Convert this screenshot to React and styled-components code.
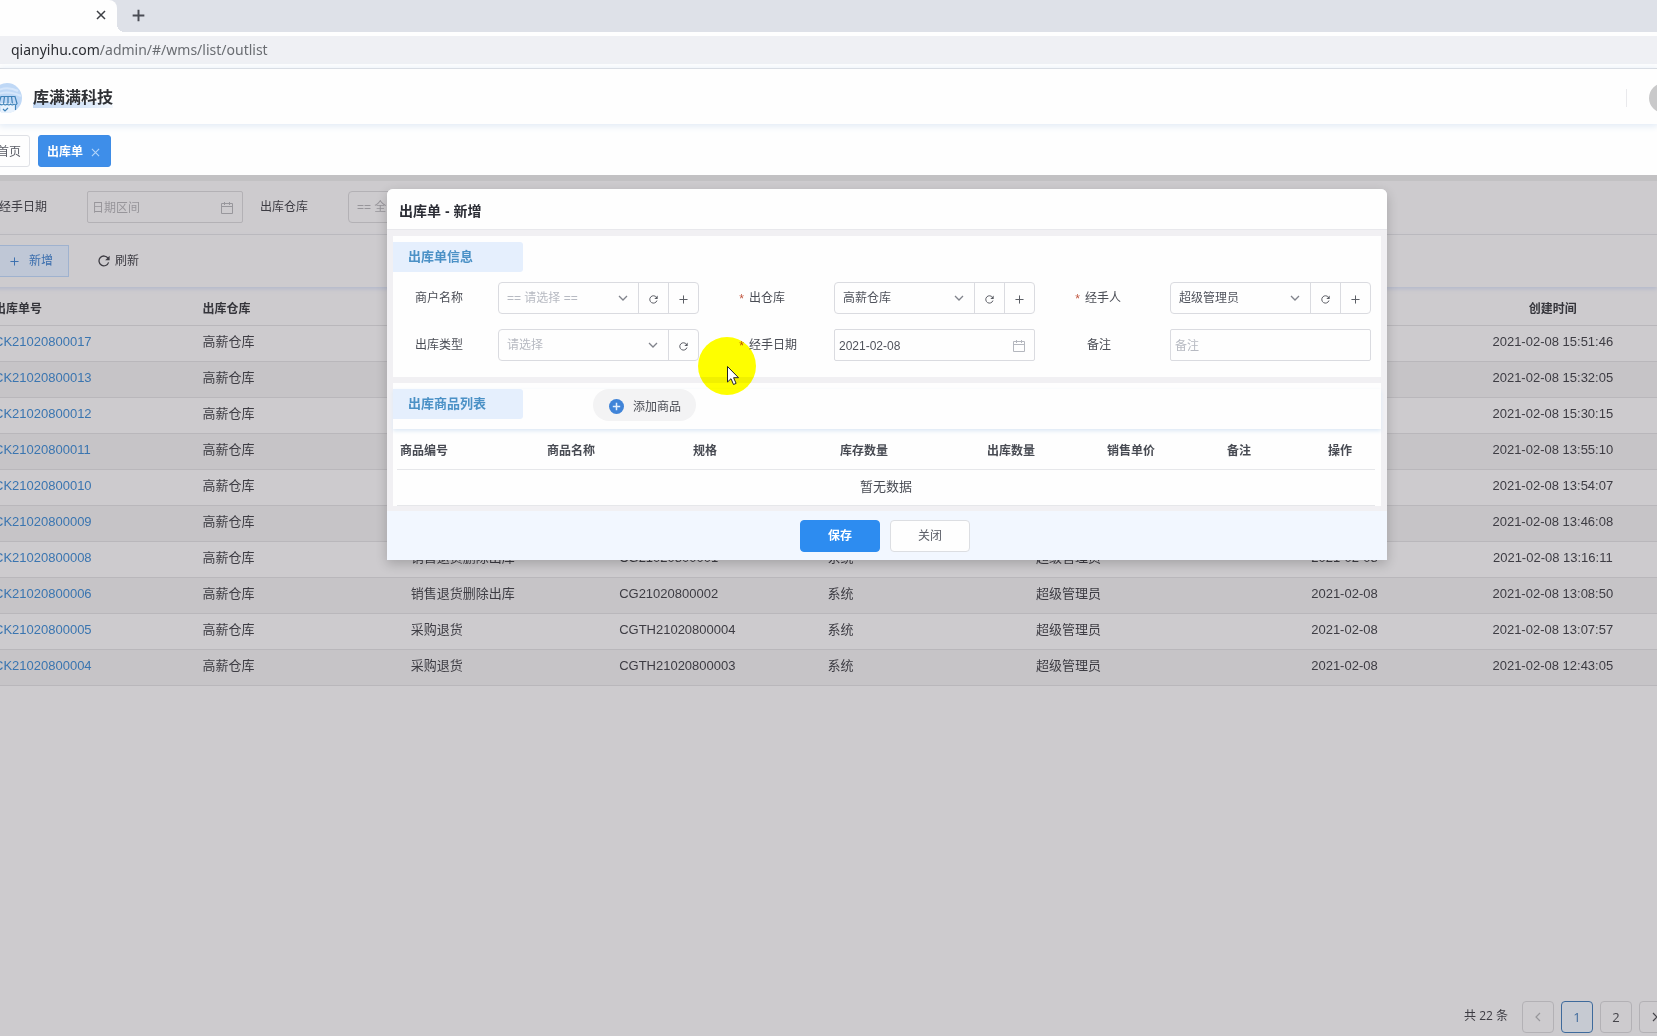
import React from "react";
import styled, { createGlobalStyle, css } from "styled-components";

const GlobalStyle = createGlobalStyle`
  *, *::before, *::after { box-sizing: border-box; }
  body {
    margin: 0;
    overflow: hidden;
    background: #fefefe;
    color: #4a4d55;
    font: 12px/18px "Liberation Sans", "Noto Sans CJK SC", sans-serif;
  }
  button, input, select { font: inherit; color: inherit; margin: 0; }
  button { cursor: pointer; }
  a { text-decoration: none; color: inherit; }
`;

/* ---------- shell ---------- */

const Page = styled.div`
  position: relative;
  display: flex;
  flex-direction: column;
  min-height: 100vh;
  overflow: hidden;
`;

const TabStrip = styled.div`
  display: flex;
  height: 32px;
  background: #dee1e8;
`;

const BrowserTab = styled.div`
  position: relative;
  display: flex;
  align-items: center;
  justify-content: flex-end;
  width: 117px;
  padding: 0 11px 2px 0;
  background: #fefefe;
  border-top-right-radius: 8px;
  &::after {
    content: "";
    position: absolute;
    left: 100%;
    bottom: 0;
    width: 8px;
    height: 8px;
    background: radial-gradient(circle at 100% 0, transparent 8px, #fefefe 8px);
  }
`;

const PlainButton = styled.button`
  display: inline-flex;
  align-items: center;
  justify-content: center;
  padding: 0;
  border: 0;
  background: none;
`;

const NewTab = styled(PlainButton)`
  padding: 0 0 2px 15px;
`;

const AddressBar = styled.div`
  padding: 4px 0;
  background: #fefefe;
  border-bottom: 1px solid #d2d3d6;
`;

const Address = styled.div`
  height: 28px;
  padding-left: 11px;
  background: #eff0f4;
  color: #6a6d72;
  font: 14px/28px "Noto Sans", "Open Sans", sans-serif;
`;

const Host = styled.span`
  color: #2c2e33;
`;

const Header = styled.header`
  position: relative;
  z-index: 1;
  display: flex;
  align-items: center;
  height: 55px;
  padding-top: 2px;
  background: #fefefe;
  box-shadow: 0 1px 7px 1px #dfe9f5;
`;

const Logo = styled.svg`
  width: 30px;
  height: 30px;
  margin-left: -8px;
  flex: none;
`;

const Brand = styled.h1`
  margin: 0 0 0 11px;
  color: #303236;
  font-size: 16px;
  line-height: 24px;
  font-weight: 700;
  background: linear-gradient(90deg, #c3d8f3, #dbe8f8 60%, transparent) 0 16px / 90px 6px no-repeat;
`;

const HeaderEnd = styled.div`
  display: flex;
  align-items: center;
  gap: 22px;
  margin: 0 -22px 0 auto;
`;

const Divider = styled.span`
  width: 1px;
  height: 18px;
  background: #e9e9ec;
`;

const Avatar = styled.span`
  width: 30px;
  height: 30px;
  border-radius: 50%;
  background: #c9c9ca;
`;

const PageTabs = styled.nav`
  display: flex;
  gap: 8px;
  margin-left: -14px;
  padding: 11px 0 8px;
`;

const PageTab = styled.a`
  display: flex;
  align-items: center;
  gap: 8px;
  height: 32px;
  padding: ${(p) => (p.$active ? "2px 10px 0 8px" : "2px 8px 0 10px")};
  border: 1px solid ${(p) => (p.$active ? "#3e8ce6" : "#dfe1e6")};
  border-radius: 3px;
  background: ${(p) => (p.$active ? "#3e8ee9" : "#fefefe")};
  color: ${(p) => (p.$active ? "#fff" : "#5a5d66")};
  font-weight: ${(p) => (p.$active ? 700 : 400)};
`;

const Main = styled.main`
  display: flex;
  flex: 1;
  flex-direction: column;
  border-top: 6px solid #c2c1c3;
  background: #cdcbce;
  color: #3d3c43;
`;

/* ---------- list behind the dialog ---------- */

const Filters = styled.div`
  display: flex;
  gap: 17px;
  margin-left: -1px;
  padding: 10px 0 11px;
  border-bottom: 1px solid #bbb9bd;
`;

const FilterItem = styled.div`
  display: flex;
  align-items: center;
`;

const FilterLabel = styled.label`
  width: 88px;
`;

const Toolbar = styled.div`
  position: relative;
  display: flex;
  align-items: center;
  margin-left: -12px;
  padding: 10px 0;
  box-shadow: 0 2px 4px #b4b9cb;
`;

const ToolButton = styled.button`
  display: flex;
  align-items: center;
  gap: ${(p) => (p.$primary ? "10px" : "5px")};
  height: 32px;
  padding: 0 ${(p) => (p.$primary ? "15px" : "28px")} 0 ${(p) => (p.$primary ? "21px" : "28px")};
  border: 1px solid ${(p) => (p.$primary ? "#9fb2cf" : "transparent")};
  background: ${(p) => (p.$primary ? "#bfc7d6" : "transparent")};
  color: ${(p) => (p.$primary ? "#3c6fae" : "inherit")};
`;

const ListTable = styled.table`
  width: calc(100% + 10px);
  margin-left: -10px;
  table-layout: fixed;
  border-collapse: collapse;
  font-size: 13px;

  th, td {
    height: 36px;
    padding: 0 4px 2px;
    border-bottom: 1px solid #b9b7bb;
    text-align: left;
    white-space: nowrap;
  }
  th {
    height: 38px;
    padding-top: 8px;
    color: #35353b;
    font-size: 12px;
  }
  th:nth-child(n + 7), td:nth-child(n + 7) { text-align: center; }
  tbody tr:nth-child(even) { background: #c6c4c7; }
`;

const CodeLink = styled.a`
  color: #3a75b0;
`;

const Pager = styled.nav`
  display: flex;
  align-items: center;
  justify-content: flex-end;
  gap: 7px;
  margin: auto -14px 0 0;
  padding-bottom: 3px;
`;

const Total = styled.span`
  margin-right: 7px;
  padding-bottom: 2px;
  font-family: "Open Sans", "Noto Sans CJK SC", sans-serif;
`;

const PageButton = styled.button`
  display: flex;
  align-items: center;
  justify-content: center;
  width: 32px;
  height: 32px;
  padding: 0;
  border: 1px solid ${(p) => (p.$current ? "#3e6a9c" : "#b3b1b5")};
  border-radius: 4px;
  background: ${(p) => (p.$current ? "#c6cad2" : "transparent")};
  color: ${(p) => (p.$current ? "#3e6a9c" : p.disabled ? "#98979b" : "#45444a")};
  font: 13px/20px "Open Sans", "Noto Sans", sans-serif;
`;

/* ---------- form controls ---------- */

const ControlGroup = styled.div`
  display: flex;
  flex: 1;
  min-width: 0;
  width: ${(p) => p.$width || "auto"};
  height: 32px;
  overflow: hidden;
  border: 1px solid ${(p) => (p.$dim ? "#b3b1b5" : "#dadbe0")};
  border-radius: ${(p) => (p.$square ? "2px" : "4px")};
`;

const Field = styled.div`
  position: relative;
  flex: 1;
  min-width: 0;
`;

const controlText = css`
  display: block;
  width: 100%;
  height: 100%;
  border: 0;
  outline: 0;
  background: transparent;
`;

const SelectBox = styled.select`
  ${controlText}
  appearance: none;
  padding: 0 28px 0 8px;
  color: ${(p) => (p.$dim ? "#97959a" : p.$empty ? "#b7bac2" : "#50535c")};
`;

const TextBox = styled.input`
  ${controlText}
  padding: 2px 28px 0 4px;
  color: #50535c;
  &::placeholder {
    color: ${(p) => (p.$dim ? "#97959a" : "#b7bac2")};
    opacity: 1;
  }
`;

const FieldIcon = styled.span`
  position: absolute;
  top: 0;
  right: ${(p) => (p.$arrow ? "10px" : "8px")};
  bottom: 0;
  display: flex;
  align-items: center;
  padding-top: ${(p) => (p.$arrow ? "0" : "2px")};
  pointer-events: none;
  color: ${(p) => (p.$dim ? "#98979c" : p.$arrow ? "#80838b" : "#b4b7be")};
`;

const AddonButton = styled(PlainButton)`
  flex: none;
  width: 30px;
  padding-top: 3px;
  border-left: 1px solid #dadbe0;
  color: #5a5d64;
`;

/* ---------- dialog ---------- */

const Overlay = styled.div`
  position: absolute;
  inset: 0;
  z-index: 2;
  display: flex;
  align-items: flex-start;
  justify-content: center;
  padding: 189px 0 0 117px;
`;

const Dialog = styled.section`
  width: 1000px;
  overflow: hidden;
  border-radius: 6px 6px 0 0;
  background: #f1f0f3;
  box-shadow: 0 4px 12px rgba(0, 0, 0, 0.2);
`;

const DialogTitle = styled.h2`
  margin: 0;
  padding: 12px 12px 7px;
  border-bottom: 1px solid #e8e8ec;
  background: #fefefe;
  color: #2b2d35;
  font-size: 14px;
  line-height: 21px;
  font-weight: 700;
`;

const DialogBody = styled.div`
  display: flex;
  flex-direction: column;
  gap: 6px;
  padding: 6px 6px 5px;
`;

const Card = styled.div`
  padding-top: 6px;
  background: #fefefe;
`;

const Badge = styled.h3`
  width: 130px;
  margin: 0;
  padding: 0 15px;
  border-radius: 0 3px 3px 0;
  background: #e5effd;
  color: #4b91c6;
  font-size: 13px;
  line-height: 30px;
  font-weight: 700;
`;

const FormGrid = styled.div`
  display: grid;
  grid-template-columns: repeat(3, 1fr);
  gap: 15px 38px;
  padding: 10px 10px 16px 8px;
`;

const FormItem = styled.div`
  display: flex;
  align-items: center;
  min-width: 0;
`;

const FormLabel = styled.label`
  display: flex;
  align-items: center;
  width: 97px;
  flex: none;
  padding-left: ${(p) => (p.$required ? "1px" : "14px")};
`;

const Star = styled.span`
  width: 11px;
  padding-top: 4px;
  color: #c0563f;
  font-family: "Liberation Mono", monospace;
`;

const CardHead = styled.div`
  position: relative;
  display: flex;
  align-items: flex-start;
  gap: 70px;
  padding-bottom: 8px;
  box-shadow: 0 2px 4px #dce8f5;
`;

const AddGoods = styled.button`
  display: flex;
  align-items: center;
  gap: 9px;
  height: 32px;
  padding: 3px 15px 0 16px;
  border: 0;
  border-radius: 16px;
  background: #f3f3f4;
`;

const GoodsTable = styled.table`
  width: calc(100% - 10px);
  margin: 0 4px;
  table-layout: fixed;
  border-collapse: collapse;
  th, td {
    height: 36px;
    padding: 0 3px;
    border-bottom: 1px solid #e6e7ea;
    text-align: left;
    white-space: nowrap;
  }
  th { height: 40px; padding-top: 4px; color: #484b53; }
  td { font-size: 13px; text-align: center; }
`;

const DialogFooter = styled.footer`
  display: flex;
  justify-content: center;
  gap: 10px;
  padding: 9px 4px 8px 0;
  background: #f2f7ff;
`;

const FooterButton = styled.button`
  width: 80px;
  height: 32px;
  padding: 0;
  border: 1px solid ${(p) => (p.$primary ? "#2d8cf0" : "#dcdee2")};
  border-radius: 4px;
  background: ${(p) => (p.$primary ? "#2d8cf0" : "#fefefe")};
  color: ${(p) => (p.$primary ? "#fff" : "#5a5d66")};
  font-weight: ${(p) => (p.$primary ? 700 : 400)};
`;

/* ---------- mouse pointer with its highlight ---------- */

const Spotlight = styled.div`
  position: absolute;
  left: 698px;
  top: 337px;
  z-index: 3;
  width: 58px;
  height: 58px;
  border-radius: 50%;
  background: #ff0;
  mix-blend-mode: multiply;
  pointer-events: none;
`;

const Pointer = styled.svg`
  position: absolute;
  left: 726px;
  top: 365px;
  z-index: 4;
  width: 14px;
  height: 21px;
  pointer-events: none;
`;

/* ---------- icons ---------- */

const Cross = ({ size = 10, color = "currentColor", width = 1.5 }) => (
  <svg width={size} height={size} viewBox="0 0 10 10" fill="none" stroke={color} strokeWidth={width} aria-hidden="true">
    <path d="M1 1l8 8M9 1l-8 8" />
  </svg>
);

const Plus = ({ size = 10, width = 1 }) => (
  <svg width={size} height={size} viewBox="0 0 10 10" fill="none" stroke="currentColor" strokeWidth={width} aria-hidden="true">
    <path d="M5 .5v9M.5 5h9" />
  </svg>
);

const Refresh = ({ size = 9 }) => (
  <svg width={size} height={size} viewBox="0 0 12 12" fill="none" stroke="currentColor" strokeWidth="1.3" aria-hidden="true">
    <path d="M10.6 7.4A4.9 4.9 0 1 1 10 3.2" />
    <path d="M11.6.8v4.4H7.2z" fill="currentColor" stroke="none" />
  </svg>
);

const Chevron = () => (
  <svg width="10" height="10" viewBox="0 0 10 10" fill="none" stroke="currentColor" strokeWidth="1.3" aria-hidden="true">
    <path d="M1 3l4 4 4-4" />
  </svg>
);

const Calendar = () => (
  <svg width="14" height="14" viewBox="0 0 14 14" fill="none" stroke="currentColor" aria-hidden="true">
    <path d="M1.500 2.500h11v10h-11zM1.500 5.500h11M4.500 1v3M9.500 1v3" strokeWidth="1" />
  </svg>
);

const Angle = ({ d }) => (
  <svg width="10" height="10" viewBox="0 0 10 10" fill="none" stroke="currentColor" strokeWidth="1.2" aria-hidden="true">
    <path d={d} />
  </svg>
);

const PlusDisc = () => (
  <svg width="15" height="15" viewBox="0 0 15 15" aria-hidden="true">
    <circle cx="7.5" cy="7.5" r="7.5" fill="#4084d8" />
    <path d="M7.5 3.8v7.4M3.8 7.5h7.4" stroke="#e4effc" strokeWidth="1.5" />
  </svg>
);

/* ---------- data ---------- */

const HEADINGS = ["出库单号", "出库仓库", "", "", "", "", "", "创建时间"];

const pending = (no, time) => [no, "高薪仓库", "", "", "", "", "", `2021-02-08 ${time}`];

const record = (no, type, ref, time) => [no, "高薪仓库", type, ref, "系统", "超级管理员", "2021-02-08", `2021-02-08 ${time}`];

const RECORDS = [
  pending("CK21020800017", "15:51:46"),
  pending("CK21020800013", "15:32:05"),
  pending("CK21020800012", "15:30:15"),
  pending("CK21020800011", "13:55:10"),
  pending("CK21020800010", "13:54:07"),
  pending("CK21020800009", "13:46:08"),
  record("CK21020800008", "销售退货删除出库", "CG21020800001", "13:16:11"),
  record("CK21020800006", "销售退货删除出库", "CG21020800002", "13:08:50"),
  record("CK21020800005", "采购退货", "CGTH21020800004", "13:07:57"),
  record("CK21020800004", "采购退货", "CGTH21020800003", "12:43:05"),
];

const GOODS_COLUMNS = [
  ["商品编号", 147],
  ["商品名称", 146],
  ["规格", 147],
  ["库存数量", 147],
  ["出库数量", 120],
  ["销售单价", 120],
  ["备注", 101],
  ["操作", undefined],
];

function SelectItem({ id, label, text, required, empty, addable }) {
  return (
    <FormItem>
      <FormLabel htmlFor={id} $required={required}>{required && <Star>*</Star>}<span>{label}</span></FormLabel>
      <ControlGroup>
        <Field>
          <SelectBox id={id} $empty={empty}>
            <option>{text}</option>
          </SelectBox>
          <FieldIcon $arrow><Chevron /></FieldIcon>
        </Field>
        <AddonButton type="button" aria-label="刷新"><Refresh /></AddonButton>
        {addable && <AddonButton type="button" aria-label="新增"><Plus size={9} width={1.1} /></AddonButton>}
      </ControlGroup>
    </FormItem>
  );
}

function OutboundDialog() {
  return (
    <Overlay>
      <Dialog role="dialog" aria-labelledby="dialog-title">
        <DialogTitle id="dialog-title">出库单 - 新增</DialogTitle>
        <DialogBody>
          <Card>
            <Badge>出库单信息</Badge>
            <FormGrid>
              <SelectItem id="merchant" label="商户名称" text="== 请选择 ==" empty addable />
              <SelectItem id="warehouse" label="出仓库" text="高薪仓库" required addable />
              <SelectItem id="handler" label="经手人" text="超级管理员" required addable />
              <SelectItem id="type" label="出库类型" text="请选择" empty />
              <FormItem>
                <FormLabel htmlFor="date" $required><Star>*</Star><span>经手日期</span></FormLabel>
                <ControlGroup $square>
                  <Field>
                    <TextBox id="date" defaultValue="2021-02-08" />
                    <FieldIcon><Calendar /></FieldIcon>
                  </Field>
                </ControlGroup>
              </FormItem>
              <FormItem>
                <FormLabel htmlFor="remark">备注</FormLabel>
                <ControlGroup $square>
                  <Field><TextBox id="remark" placeholder="备注" /></Field>
                </ControlGroup>
              </FormItem>
            </FormGrid>
          </Card>
          <Card>
            <CardHead>
              <Badge>出库商品列表</Badge>
              <AddGoods type="button"><PlusDisc />添加商品</AddGoods>
            </CardHead>
            <GoodsTable>
              <colgroup>
                {GOODS_COLUMNS.map(([name, width]) => <col key={name} width={width} />)}
              </colgroup>
              <thead>
                <tr>{GOODS_COLUMNS.map(([name]) => <th key={name}>{name}</th>)}</tr>
              </thead>
              <tbody>
                <tr><td colSpan={8}>暂无数据</td></tr>
              </tbody>
            </GoodsTable>
          </Card>
        </DialogBody>
        <DialogFooter>
          <FooterButton type="button" $primary>保存</FooterButton>
          <FooterButton type="button">关闭</FooterButton>
        </DialogFooter>
      </Dialog>
    </Overlay>
  );
}

export default function App() {
  return (
    <Page>
      <GlobalStyle />
      <TabStrip>
        <BrowserTab>
          <PlainButton type="button" aria-label="关闭标签页"><Cross size={10} color="#3c3f44" width={1.5} /></PlainButton>
        </BrowserTab>
        <NewTab type="button" aria-label="新标签页"><Plus size={13} width={1.5} /></NewTab>
      </TabStrip>
      <AddressBar>
        <Address><Host>qianyihu.com</Host>/admin/#/wms/list/outlist</Address>
      </AddressBar>
      <Header>
        <Logo viewBox="0 0 30 30" aria-hidden="true">
          <circle cx="15" cy="15" r="15" fill="#bfd8f6" />
          <path d="M3 9Q14 2 26 8M2 13Q14 6 29 13" stroke="#d6e6fa" strokeWidth="2" fill="none" />
          <path d="M8 20h15v8l-5 2H9z" fill="#e8f2fd" />
          <path d="M9 13.500h14l2 7q-1 2.200-3 .6-1.700 1.400-3.400 0-1.800 1.400-3.600 0-1.700 1.400-3.400 0-2 1.600-4.600-.6zM12.500 13.500l-.9 7M16 13.500v7M19.500 13.500l.9 7M23.500 22v5M11 26l2 2 3-3" fill="none" stroke="#3f82b8" strokeWidth="1.2" />
        </Logo>
        <Brand>库满满科技</Brand>
        <HeaderEnd><Divider /><Avatar /></HeaderEnd>
      </Header>
      <PageTabs>
        <PageTab href="#/home">首页</PageTab>
        <PageTab href="#/wms/list/outlist" $active>出库单<Cross size={9} color="#b5d6fa" width={1.2} /></PageTab>
      </PageTabs>
      <Main>
        <Filters>
          <FilterItem>
            <FilterLabel htmlFor="range">经手日期</FilterLabel>
            <ControlGroup $dim $square $width="156px">
              <Field>
                <TextBox id="range" placeholder="日期区间" $dim />
                <FieldIcon $dim><Calendar /></FieldIcon>
              </Field>
            </ControlGroup>
          </FilterItem>
          <FilterItem>
            <FilterLabel htmlFor="filter-warehouse">出库仓库</FilterLabel>
            <ControlGroup $dim $width="156px">
              <Field>
                <SelectBox id="filter-warehouse" $dim>
                  <option>== 全</option>
                </SelectBox>
              </Field>
            </ControlGroup>
          </FilterItem>
        </Filters>
        <Toolbar>
          <ToolButton type="button" $primary><Plus size={9} width={1.1} />新增</ToolButton>
          <ToolButton type="button"><Refresh size={12} />刷新</ToolButton>
        </Toolbar>
        <ListTable>
          <thead>
            <tr>{HEADINGS.map((name, i) => <th key={i}>{name}</th>)}</tr>
          </thead>
          <tbody>
            {RECORDS.map((cells) => (
              <tr key={cells[0]}>
                {cells.map((cell, i) => (
                  <td key={i}>{i === 0 ? <CodeLink href={`#/wms/out/${cell}`}>{cell}</CodeLink> : cell}</td>
                ))}
              </tr>
            ))}
          </tbody>
        </ListTable>
        <Pager aria-label="分页">
          <Total>共 22 条</Total>
          <PageButton type="button" disabled aria-label="上一页"><Angle d="M7 1L3 5l4 4" /></PageButton>
          <PageButton type="button" $current>1</PageButton>
          <PageButton type="button">2</PageButton>
          <PageButton type="button" aria-label="下一页"><Angle d="M3 1l4 4-4 4" /></PageButton>
        </Pager>
      </Main>
      <OutboundDialog />
      <Spotlight />
      <Pointer viewBox="0 0 14 21" aria-hidden="true">
        <path d="M1.500 1.500v15.500l3.500-3.300 2.500 5.800 2.600-1.100-2.500-5.700h4.900z" fill="#fff" stroke="#222" strokeWidth="1" />
      </Pointer>
    </Page>
  );
}
